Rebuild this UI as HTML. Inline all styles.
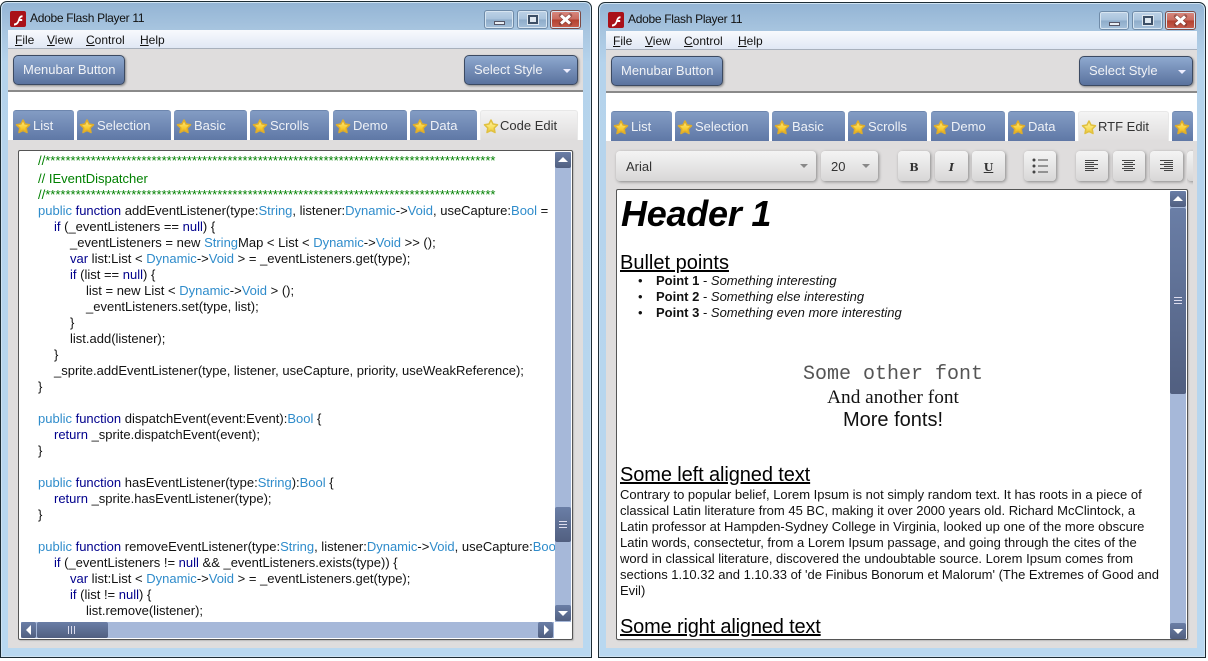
<!DOCTYPE html>
<html><head><meta charset="utf-8"><style>
html,body{margin:0;padding:0;width:1208px;height:661px;overflow:hidden;background:#fff;font-family:"Liberation Sans",sans-serif}
div,span.a,svg.a{position:absolute;box-sizing:border-box}
.win{top:1px;height:657px;background:linear-gradient(#93b4d4 0,#a9c6e0 30px,#b5d3ec 60px,#b9d8f0 100%);border:1px solid #1c2c34;border-radius:7px 7px 0 0;box-shadow:inset 0 0 0 1px #cfe3f2}
.title{font-size:12px;color:#111;white-space:pre;letter-spacing:-.3px}
.menubar{background:linear-gradient(#f8fafd,#dfe7f4);height:19px}
.mi{font-size:12px;color:#111;white-space:pre}
.btn{background:linear-gradient(#8ea9cf,#5a729e);border:1px solid #3c4a62;border-radius:5px;color:#f0f2f6;font-size:13px;line-height:28px;box-shadow:1px 1px 2px #888;white-space:pre}
.tab{top:0;height:30px;background:linear-gradient(#839cc4,#5f78a6);border-radius:3px 3px 0 0;color:#eef1f6;font-size:13px;line-height:29px;white-space:pre;border-top:1px solid #6d86ae}
.tab.on{background:linear-gradient(#f4f4f4,#dfdddd);color:#333;border:1px solid #e8e8e8;border-bottom:0;line-height:30px}
.tab svg{position:absolute;left:2px;top:7px}
.tab span{position:absolute;left:20px;top:0}
.tab.on span{left:19px}
.wb{top:0;height:19px;border-radius:3px;border:1px solid #6f8ba8;background:linear-gradient(#bdd2e6 0,#a8c2dc 50%,#8eacc9 51%,#a5c0da 100%);box-shadow:inset 0 0 0 1px #d7e5f1}
.wb.x{background:linear-gradient(#d98a80 0,#c86a5e 50%,#b2402f 51%,#c86050 100%);border-color:#7d4a45}
.tool{background:linear-gradient(#f4f4f4,#d8d7d7);border-radius:4px;box-shadow:1px 1px 3px #888;top:11px;height:30px;color:#333;font-size:13px;white-space:pre;line-height:32px}
.tri{width:0;height:0;border-left:4px solid transparent;border-right:4px solid transparent;border-top:4px solid #888}
.box{background:#fff;border:1px solid #555;border-radius:2px;overflow:hidden;box-shadow:1px 1px 1px #bbb}
.sb{background:#a6b8d9}
.sbtn{background:linear-gradient(#6a7ea6,#515f80);border-radius:2px}
.ln{left:19px;font-size:13px;line-height:16px;height:16px;white-space:pre;color:#111}
.c{color:#008000}.k{color:#2f8ccb}.f{color:#00008c}
.p{font-size:13px;line-height:16px;white-space:pre;color:#111}
.h2{font-size:20px;line-height:24px;color:#000;text-decoration:underline;white-space:pre}
</style></head><body>
<svg width="0" height="0" style="position:absolute"><defs>
<linearGradient id="s" x1="0" y1="0" x2="0" y2="1"><stop offset="0" stop-color="#ffe98a"/><stop offset=".6" stop-color="#f8cf35"/><stop offset="1" stop-color="#e8a818"/></linearGradient>
<linearGradient id="t" x1="0" y1="0" x2="0" y2="1"><stop offset="0" stop-color="#fff2a8"/><stop offset=".6" stop-color="#f8e060"/><stop offset="1" stop-color="#e8c038"/></linearGradient>
<symbol id="st" viewBox="0 0 16 16"><polygon points="8,2 10,6 14.500,6.800 11.200,10 12,14.500 8,12.400 4,14.500 4.800,10 1.500,6.800 6,6" fill="url(#s)" stroke="#e0ae2a" stroke-width="1.500" stroke-linejoin="round"/></symbol>
<symbol id="so" viewBox="0 0 16 16"><polygon points="8,2 10,6 14.500,6.800 11.200,10 12,14.500 8,12.400 4,14.500 4.800,10 1.500,6.800 6,6" fill="url(#t)" stroke="#e0c040" stroke-width="1.500" stroke-linejoin="round"/></symbol>
<symbol id="xx" viewBox="0 0 29 17"><path d="M10 4.500L19 12.500M19 4.500L10 12.500" stroke="#5a2a25" stroke-width="4.500" stroke-linecap="round" opacity=".45"/><path d="M10 4.500L19 12.500M19 4.500L10 12.500" stroke="#fff" stroke-width="3"/></symbol>
<symbol id="fl" viewBox="0 0 16 16"><rect width="16" height="16" rx="2" fill="#a91018"/><path d="M4 12.500c3-.3 3.500-2 4.300-4.500.7-2 1.500-3.600 4.200-3.800v2c-1.500.1-2 .8-2.400 1.800h2.100v2H9.400c-.8 2.300-2 4.300-5.400 4.500z" fill="#fff"/></symbol>
</defs></svg>

<!-- LEFT WINDOW -->
<div class="win" style="left:0;width:592px"></div>
<svg class="a" style="left:10px;top:11px" width="16" height="16"><use href="#fl"/></svg>
<div class="title" style="left:30px;top:11px">Adobe Flash Player 11</div>
<div class="wb" style="left:484px;top:10px;width:30px"><div style="left:9px;top:10px;width:11px;height:4px;background:#e8eef4;border:1px solid #556"></div></div>
<div class="wb" style="left:517px;top:10px;width:31px"><div style="left:10px;top:4px;width:10px;height:9px;border:2px solid #3c4f66;background:#dfe8f0;box-shadow:0 0 0 1px #dfe8f0"></div></div>
<div class="wb x" style="left:550px;top:10px;width:31px"><svg class="a" style="left:0;top:0" width="29" height="17"><use href="#xx"/></svg></div>

<div class="menubar" style="left:8px;top:30px;width:575px"></div>
<div class="mi" style="left:15px;top:33px"><u>F</u>ile</div>
<div class="mi" style="left:47px;top:33px"><u>V</u>iew</div>
<div class="mi" style="left:86px;top:33px"><u>C</u>ontrol</div>
<div class="mi" style="left:140px;top:33px"><u>H</u>elp</div>
<div style="left:8px;top:48px;width:575px;height:44px;background:#dfdddd;border-top:1px solid #a8b0bc;border-bottom:2px solid #8a8a8a"></div>
<div style="left:8px;top:92px;width:575px;height:48px;background:#fff"></div>
<div class="btn" style="left:13px;top:55px;width:112px;height:30px;padding-left:9px">Menubar Button</div>
<div class="btn" style="left:464px;top:55px;width:114px;height:30px;padding-left:9px">Select Style<div class="tri" style="left:98px;top:13px;border-top-color:#eef"></div></div>

<div style="left:8px;top:140px;width:575px;height:508px;background:#dfdddd"></div>
<div style="left:0;top:110px;width:0;height:30px">
<div class="tab" style="left:13px;width:61px"><svg width="16" height="16"><use href="#st"/></svg><span>List</span></div>
<div class="tab" style="left:77px;width:94px"><svg width="16" height="16"><use href="#st"/></svg><span>Selection</span></div>
<div class="tab" style="left:174px;width:73px"><svg width="16" height="16"><use href="#st"/></svg><span>Basic</span></div>
<div class="tab" style="left:250px;width:79px"><svg width="16" height="16"><use href="#st"/></svg><span>Scrolls</span></div>
<div class="tab" style="left:333px;width:74px"><svg width="16" height="16"><use href="#st"/></svg><span>Demo</span></div>
<div class="tab" style="left:410px;width:67px"><svg width="16" height="16"><use href="#st"/></svg><span>Data</span></div>
<div class="tab on" style="left:480px;width:98px"><svg width="16" height="16"><use href="#so"/></svg><span>Code Edit</span></div>
</div>

<div class="box" style="left:18px;top:150px;width:555px;height:490px">
<div style="left:0;top:0;width:536px;height:471px;overflow:hidden">
<div class="ln c" style="top:2px">//*****************************************************************************************</div>
<div class="ln c" style="top:20px">// IEventDispatcher</div>
<div class="ln c" style="top:36px">//*****************************************************************************************</div>
<div class="ln" style="top:52px;left:19px"><span class="k">public</span> <span class="f">function</span> addEventListener(type:<span class="k">String</span>, listener:<span class="k">Dynamic</span>-&gt;<span class="k">Void</span>, useCapture:<span class="k">Bool</span> =</div>
<div class="ln" style="top:68px;left:35px"><span class="f">if</span> (_eventListeners == <span class="f">null</span>) {</div>
<div class="ln" style="top:84px;left:51px">_eventListeners = new <span class="k">String</span>Map &lt; List &lt; <span class="k">Dynamic</span>-&gt;<span class="k">Void</span> &gt;&gt; ();</div>
<div class="ln" style="top:100px;left:51px"><span class="f">var</span> list:List &lt; <span class="k">Dynamic</span>-&gt;<span class="k">Void</span> &gt; = _eventListeners.get(type);</div>
<div class="ln" style="top:116px;left:51px"><span class="f">if</span> (list == <span class="f">null</span>) {</div>
<div class="ln" style="top:132px;left:67px">list = new List &lt; <span class="k">Dynamic</span>-&gt;<span class="k">Void</span> &gt; ();</div>
<div class="ln" style="top:148px;left:67px">_eventListeners.set(type, list);</div>
<div class="ln" style="top:164px;left:51px">}</div>
<div class="ln" style="top:180px;left:51px">list.add(listener);</div>
<div class="ln" style="top:196px;left:35px">}</div>
<div class="ln" style="top:212px;left:35px">_sprite.addEventListener(type, listener, useCapture, priority, useWeakReference);</div>
<div class="ln" style="top:228px;left:19px">}</div>
<div class="ln" style="top:260px;left:19px"><span class="k">public</span> <span class="f">function</span> dispatchEvent(event:Event):<span class="k">Bool</span> {</div>
<div class="ln" style="top:276px;left:35px"><span class="f">return</span> _sprite.dispatchEvent(event);</div>
<div class="ln" style="top:292px;left:19px">}</div>
<div class="ln" style="top:324px;left:19px"><span class="k">public</span> <span class="f">function</span> hasEventListener(type:<span class="k">String</span>):<span class="k">Bool</span> {</div>
<div class="ln" style="top:340px;left:35px"><span class="f">return</span> _sprite.hasEventListener(type);</div>
<div class="ln" style="top:356px;left:19px">}</div>
<div class="ln" style="top:388px;left:19px"><span class="k">public</span> <span class="f">function</span> removeEventListener(type:<span class="k">String</span>, listener:<span class="k">Dynamic</span>-&gt;<span class="k">Void</span>, useCapture:<span class="k">Bool</span> = false):Void {</div>
<div class="ln" style="top:404px;left:35px"><span class="f">if</span> (_eventListeners != <span class="f">null</span> &amp;&amp; _eventListeners.exists(type)) {</div>
<div class="ln" style="top:420px;left:51px"><span class="f">var</span> list:List &lt; <span class="k">Dynamic</span>-&gt;<span class="k">Void</span> &gt; = _eventListeners.get(type);</div>
<div class="ln" style="top:436px;left:51px"><span class="f">if</span> (list != <span class="f">null</span>) {</div>
<div class="ln" style="top:452px;left:67px">list.remove(listener);</div>
</div>
<div class="sb" style="left:536px;top:1px;width:16px;height:470px"></div>
<div class="sbtn" style="left:536px;top:1px;width:16px;height:16px"><div class="tri" style="left:3px;top:5px;border-top:0;border-bottom:5px solid #fff;border-left-width:5px;border-right-width:5px"></div></div>
<div class="sbtn" style="left:536px;top:356px;width:16px;height:35px"><div style="left:4px;top:14px;width:8px;height:7px;border-top:1px solid #dde;border-bottom:1px solid #dde"></div><div style="left:4px;top:17px;width:8px;height:1px;background:#dde"></div></div>
<div class="sbtn" style="left:536px;top:454px;width:16px;height:16px"><div class="tri" style="left:3px;top:6px;border-top:5px solid #fff;border-left-width:5px;border-right-width:5px"></div></div>
<div class="sb" style="left:2px;top:471px;width:533px;height:16px"></div>
<div class="sbtn" style="left:2px;top:471px;width:15px;height:16px"><div class="tri" style="left:5px;top:3px;border:5px solid transparent;border-right:5px solid #fff;border-left:0"></div></div>
<div class="sbtn" style="left:18px;top:471px;width:71px;height:16px"><div style="left:31px;top:4px;width:1px;height:8px;background:#dde;box-shadow:3px 0 #dde,6px 0 #dde"></div></div>
<div class="sbtn" style="left:519px;top:471px;width:15px;height:16px"><div class="tri" style="left:6px;top:3px;border:5px solid transparent;border-left:5px solid #fff;border-right:0"></div></div>
</div>

<!-- RIGHT WINDOW -->
<div class="win" style="left:598px;width:608px;top:2px;height:656px"></div>
<svg class="a" style="left:608px;top:12px" width="16" height="16"><use href="#fl"/></svg>
<div class="title" style="left:628px;top:12px">Adobe Flash Player 11</div>
<div class="wb" style="left:1099px;top:11px;width:30px"><div style="left:9px;top:10px;width:11px;height:4px;background:#e8eef4;border:1px solid #556"></div></div>
<div class="wb" style="left:1132px;top:11px;width:31px"><div style="left:10px;top:4px;width:10px;height:9px;border:2px solid #3c4f66;background:#dfe8f0;box-shadow:0 0 0 1px #dfe8f0"></div></div>
<div class="wb x" style="left:1165px;top:11px;width:31px"><svg class="a" style="left:0;top:0" width="29" height="17"><use href="#xx"/></svg></div>

<div class="menubar" style="left:606px;top:31px;width:591px"></div>
<div class="mi" style="left:613px;top:34px"><u>F</u>ile</div>
<div class="mi" style="left:645px;top:34px"><u>V</u>iew</div>
<div class="mi" style="left:684px;top:34px"><u>C</u>ontrol</div>
<div class="mi" style="left:738px;top:34px"><u>H</u>elp</div>
<div style="left:606px;top:49px;width:591px;height:44px;background:#dfdddd;border-top:1px solid #a8b0bc;border-bottom:2px solid #8a8a8a"></div>
<div style="left:606px;top:93px;width:591px;height:48px;background:#fff"></div>
<div class="btn" style="left:611px;top:56px;width:112px;height:30px;padding-left:9px">Menubar Button</div>
<div class="btn" style="left:1079px;top:56px;width:114px;height:30px;padding-left:9px">Select Style<div class="tri" style="left:98px;top:13px;border-top-color:#eef"></div></div>

<div style="left:606px;top:141px;width:591px;height:507px;background:#dfdddd"></div>
<div style="left:0;top:111px;width:0;height:30px">
<div class="tab" style="left:611px;width:61px"><svg width="16" height="16"><use href="#st"/></svg><span>List</span></div>
<div class="tab" style="left:675px;width:94px"><svg width="16" height="16"><use href="#st"/></svg><span>Selection</span></div>
<div class="tab" style="left:772px;width:73px"><svg width="16" height="16"><use href="#st"/></svg><span>Basic</span></div>
<div class="tab" style="left:848px;width:79px"><svg width="16" height="16"><use href="#st"/></svg><span>Scrolls</span></div>
<div class="tab" style="left:931px;width:74px"><svg width="16" height="16"><use href="#st"/></svg><span>Demo</span></div>
<div class="tab" style="left:1008px;width:67px"><svg width="16" height="16"><use href="#st"/></svg><span>Data</span></div>
<div class="tab on" style="left:1078px;width:91px"><svg width="16" height="16"><use href="#so"/></svg><span>RTF Edit</span></div>
<div class="tab" style="left:1172px;width:21px"><svg width="16" height="16"><use href="#st"/></svg></div>
</div>

<div style="left:0;top:140px;width:1208px;height:0">
<div class="tool" style="left:616px;width:200px;padding-left:10px">Arial<div class="tri" style="left:184px;top:13px"></div></div>
<div class="tool" style="left:821px;width:57px;padding-left:10px">20<div class="tri" style="left:41px;top:13px"></div></div>
<div class="tool" style="left:898px;width:32px;text-align:center;font:bold 11px/33px 'DejaVu Serif',serif">B</div>
<div class="tool" style="left:935px;width:33px;text-align:center;font:italic bold 11px/33px 'DejaVu Serif',serif">I</div>
<div class="tool" style="left:972px;width:33px;text-align:center;font:bold 11px/33px 'DejaVu Serif',serif"><u>U</u></div>
<div class="tool" style="left:1024px;width:32px"><svg class="a" style="left:8px;top:7px" width="16" height="16"><g fill="#444"><circle cx="2" cy="2" r="1.500"/><circle cx="2" cy="8" r="1.500"/><circle cx="2" cy="14" r="1.500"/><rect x="6" y="1.500" width="10" height="1"/><rect x="6" y="7.500" width="10" height="1"/><rect x="6" y="13.500" width="10" height="1"/></g></svg></div>
<div class="tool" style="left:1076px;width:32px"><svg class="a" style="left:9px;top:8px" width="14" height="14"><g fill="#444"><rect y="1" width="13" height="1"/><rect y="3" width="9" height="1"/><rect y="5" width="13" height="1"/><rect y="7" width="9" height="1"/><rect y="9" width="13" height="1"/><rect y="11" width="9" height="1"/></g></svg></div>
<div class="tool" style="left:1113px;width:32px"><svg class="a" style="left:9px;top:8px" width="14" height="14"><g fill="#444"><rect y="1" width="13" height="1"/><rect x="2" y="3" width="9" height="1"/><rect y="5" width="13" height="1"/><rect x="2" y="7" width="9" height="1"/><rect y="9" width="13" height="1"/><rect x="2" y="11" width="9" height="1"/></g></svg></div>
<div class="tool" style="left:1150px;width:33px"><svg class="a" style="left:10px;top:8px" width="14" height="14"><g fill="#444"><rect y="1" width="13" height="1"/><rect x="4" y="3" width="9" height="1"/><rect y="5" width="13" height="1"/><rect x="4" y="7" width="9" height="1"/><rect y="9" width="13" height="1"/><rect x="4" y="11" width="9" height="1"/></g></svg></div>
<div style="left:1187px;top:9px;width:6px;height:36px;overflow:hidden"><div class="tool" style="left:0;top:2px;width:32px"></div></div>
</div>

<div class="box" style="left:616px;top:189px;width:572px;height:451px">
<div class="p" style="left:4px;top:2px;font:italic bold 36px/44px 'Liberation Sans',sans-serif;color:#000;letter-spacing:-.25px">Header 1</div>
<div class="h2" style="left:3px;top:61px">Bullet points</div>
<div class="p" style="left:21px;top:83px">•</div><div class="p" style="left:39px;top:83px"><b>Point 1</b> - <i>Something interesting</i></div>
<div class="p" style="left:21px;top:99px">•</div><div class="p" style="left:39px;top:99px"><b>Point 2</b> - <i>Something else interesting</i></div>
<div class="p" style="left:21px;top:115px">•</div><div class="p" style="left:39px;top:115px"><b>Point 3</b> - <i>Something even more interesting</i></div>
<div class="p" style="left:0;width:552px;text-align:center;top:173px;font:20px/24px 'Liberation Mono',monospace;color:#555">Some other font</div>
<div class="p" style="left:0;width:552px;text-align:center;top:197px;font:19.300px/22px 'Liberation Serif',serif;color:#111">And another font</div>
<div class="p" style="left:0;width:552px;text-align:center;top:218px;font:20px/24px 'Liberation Sans',sans-serif;color:#111">More fonts!</div>
<div class="h2" style="left:3px;top:273px;letter-spacing:-.1px">Some left aligned text</div>
<div class="p" style="left:3px;top:297px">Contrary to popular belief, Lorem Ipsum is not simply random text. It has roots in a piece of</div>
<div class="p" style="left:3px;top:313px">classical Latin literature from 45 BC, making it over 2000 years old. Richard McClintock, a</div>
<div class="p" style="left:3px;top:329px">Latin professor at Hampden-Sydney College in Virginia, looked up one of the more obscure</div>
<div class="p" style="left:3px;top:345px">Latin words, consectetur, from a Lorem Ipsum passage, and going through the cites of the</div>
<div class="p" style="left:3px;top:361px">word in classical literature, discovered the undoubtable source. Lorem Ipsum comes from</div>
<div class="p" style="left:3px;top:377px">sections 1.10.32 and 1.10.33 of 'de Finibus Bonorum et Malorum' (The Extremes of Good and</div>
<div class="p" style="left:3px;top:393px">Evil)</div>
<div class="h2" style="left:3px;top:425px;letter-spacing:-.17px">Some right aligned text</div>
<div class="sb" style="left:553px;top:1px;width:16px;height:448px"></div>
<div class="sbtn" style="left:553px;top:1px;width:16px;height:16px"><div class="tri" style="left:3px;top:5px;border-top:0;border-bottom:5px solid #fff;border-left-width:5px;border-right-width:5px"></div></div>
<div class="sbtn" style="left:553px;top:18px;width:16px;height:186px"><div style="left:4px;top:89px;width:8px;height:7px;border-top:1px solid #dde;border-bottom:1px solid #dde"></div><div style="left:4px;top:92px;width:8px;height:1px;background:#dde"></div></div>
<div class="sbtn" style="left:553px;top:433px;width:16px;height:16px"><div class="tri" style="left:3px;top:6px;border-top:5px solid #fff;border-left-width:5px;border-right-width:5px"></div></div>
</div>
</body></html>
